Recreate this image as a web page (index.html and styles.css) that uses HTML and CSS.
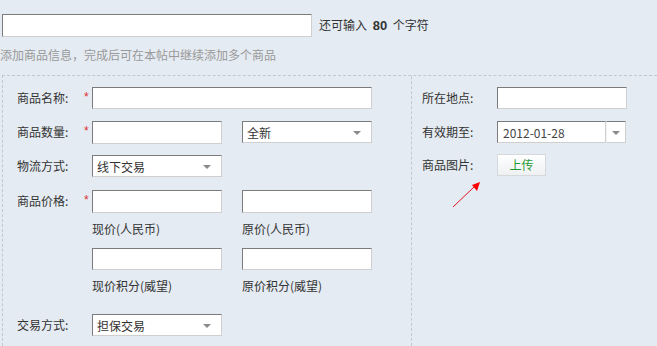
FILE: index.html
```html
<!DOCTYPE html>
<html lang="zh-CN">
<head>
<meta charset="utf-8">
<title>添加商品</title>
<link rel="stylesheet" href="styles.css">
</head>
<body>
<div class="top">
  <input class="inp title-inp" type="text">
  <span class="counter">还可输入 <b>80</b> 个字符</span>
</div>
<div class="hint">添加商品信息，完成后可在本帖中继续添加多个商品</div>
<div class="panel">
  <div class="left">
    <div class="row r1">
      <span class="label">商品名称:</span><span class="star">*</span>
      <input class="inp w280" type="text">
    </div>
    <div class="row r2">
      <span class="label">商品数量:</span><span class="star">*</span>
      <input class="inp w130 h23" type="text">
      <div class="select w130 ml20"><span>全新</span><i class="tri"></i></div>
    </div>
    <div class="row r3">
      <span class="label">物流方式:</span><span class="star"></span>
      <div class="select w130 h23"><span>线下交易</span><i class="tri"></i></div>
    </div>
    <div class="row r4">
      <span class="label">商品价格:</span><span class="star">*</span>
      <div class="pricegrid">
        <div class="cell"><input class="inp w130 h23" type="text"><div class="cap">现价(人民币)</div></div>
        <div class="cell"><input class="inp w130 h23" type="text"><div class="cap">原价(人民币)</div></div>
        <div class="cell c2"><input class="inp w130" type="text"><div class="cap">现价积分(威望)</div></div>
        <div class="cell c2"><input class="inp w130" type="text"><div class="cap">原价积分(威望)</div></div>
      </div>
    </div>
    <div class="row r5">
      <span class="label">交易方式:</span><span class="star"></span>
      <div class="select w130"><span>担保交易</span><i class="tri"></i></div>
    </div>
  </div>
  <div class="right">
    <div class="row r1">
      <span class="rlabel">所在地点:</span>
      <input class="inp w130" type="text">
    </div>
    <div class="row r2">
      <span class="rlabel">有效期至:</span>
      <input class="inp date" type="text" value="2012-01-28">
      <div class="datebtn"><i class="tri"></i></div>
    </div>
    <div class="row r3r">
      <span class="rlabel">商品图片:</span>
      <button class="upload" type="button">上传</button>
    </div>
  </div>
</div>
<svg class="arrow" width="36" height="32" viewBox="0 0 36 32">
  <line x1="3" y1="28" x2="24" y2="8" stroke="#e0141e" stroke-width="1"/>
  <polygon points="30,3 22,6 27,12" fill="#ff0000"/>
</svg>
</body>
</html>
```
FILE: styles.css
```css
html, body {
  margin: 0;
  padding: 0;
}
body {
  width: 657px;
  height: 346px;
  overflow: hidden;
  background: #e5ebf2;
  font-family: "Noto Sans CJK SC", "Liberation Sans", sans-serif;
  font-size: 12px;
  color: #333;
  position: relative;
}
.inp {
  box-sizing: border-box;
  height: 22px;
  margin: 0;
  padding: 0 4px;
  background: #fff;
  border: 1px solid;
  border-color: #7b7b7b #cfcfcf #cfcfcf #7b7b7b;
  font-family: inherit;
  font-size: 12px;
  color: #444;
  outline: none;
  display: block;
}
.top {
  display: flex;
  align-items: center;
  padding: 13px 0 0 2px;
}
.title-inp {
  width: 310px;
  height: 23px;
}
.counter {
  margin-left: 7px;
  font-size: 12px;
  color: #333;
  line-height: 23px;
}
.counter b {
  font-family: "Liberation Sans", Arial, sans-serif;
  font-weight: bold;
  font-size: 13px;
  margin: 0 3px;
  color: #333;
}
.hint {
  margin-top: 9px;
  height: 18px;
  line-height: 18px;
  color: #999;
}
.panel {
  margin: 11px 0 0 2px;
  border-top: 1px dashed #c2c8d0;
  border-left: 1px dashed #c2c8d0;
  display: flex;
  height: 270px;
}
.left {
  width: 409px;
  padding-top: 11px;
  box-sizing: border-box;
  border-right: 1px dashed #c2c8d0;
}
.right {
  flex: 1;
  padding-top: 11px;
  padding-left: 10px;
}
.row {
  display: flex;
  align-items: flex-start;
}
.left .row {
  padding-left: 14px;
}
.label {
  width: 67px;
  line-height: 22px;
  color: #333;
}
.star {
  width: 8px;
  line-height: 20px;
  color: #e03030;
  font-family: "Liberation Sans", sans-serif;
  font-size: 12px;
}
.rlabel {
  width: 75px;
  line-height: 22px;
  color: #333;
}
.r2 { margin-top: 12px; }
.r3 { margin-top: 11px; }
.r3r { margin-top: 11px; }
.r4 { margin-top: 13px; }
.r5 { margin-top: 17px; }
.w280 { width: 280px; }
.w130 { width: 130px; }
.h23 { height: 23px; }
.ml20 { margin-left: 20px; }
.select {
  box-sizing: border-box;
  height: 22px;
  background: #fff;
  border: 1px solid;
  border-color: #7b7b7b #cfcfcf #cfcfcf #7b7b7b;
  display: flex;
  align-items: center;
  justify-content: space-between;
  padding: 0 10px 0 4px;
  color: #333;
}
.tri {
  width: 0;
  height: 0;
  border-left: 4px solid transparent;
  border-right: 4px solid transparent;
  border-top: 4px solid #8a8a8a;
  margin-top: 2px;
}
.pricegrid {
  display: grid;
  grid-template-columns: 130px 130px;
  column-gap: 20px;
}
.cap {
  margin-top: 5px;
  line-height: 22px;
  color: #333;
}
.c2 {
  margin-top: 8px;
}
.date {
  width: 109px;
  color: #444;
  padding-left: 5px;
}
.datebtn {
  box-sizing: border-box;
  width: 20px;
  height: 22px;
  background: #fff;
  border: 1px solid;
  border-color: #7b7b7b #cfcfcf #cfcfcf #f2f2f2;
  display: flex;
  align-items: center;
  justify-content: center;
}
.upload {
  box-sizing: border-box;
  width: 49px;
  height: 22px;
  margin: 0;
  padding: 0;
  border: 1px solid #d6d9dc;
  background: linear-gradient(#ffffff, #eef0f2);
  color: #1f9a35;
  font-family: inherit;
  font-size: 12px;
  line-height: 20px;
}
.arrow {
  position: absolute;
  left: 450px;
  top: 179px;
}
```
